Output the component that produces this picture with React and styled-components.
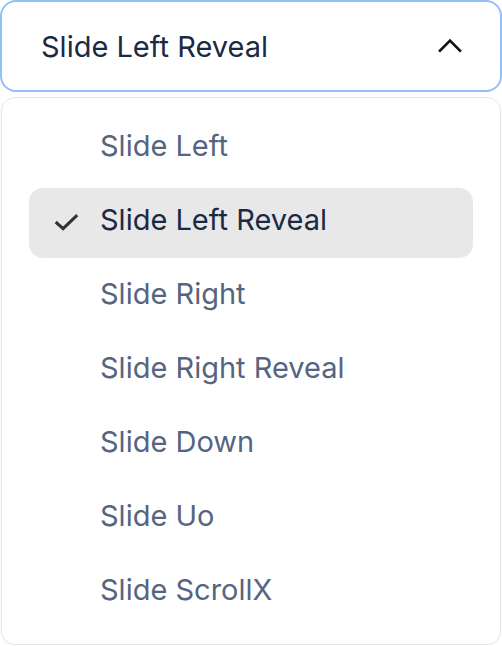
import React, { useState } from 'react';
import styled, { createGlobalStyle } from 'styled-components';

const GlobalStyle = createGlobalStyle`
body {
    margin: 0;
    background: #ffffff;
    font-family: Inter, "Noto Sans", sans-serif;
}
`

const Wrapper = styled.div`
width: 502px;
display: flex;
flex-direction: column;
gap: 5px;
`

const Trigger = styled.button`
box-sizing: border-box;
width: 502px;
height: 92px;
display: flex;
align-items: center;
justify-content: space-between;
padding: 0 34px 0 39px;
background: #ffffff;
border: 2px solid #93c0fb;
border-radius: 16px;
font-family: inherit;
font-size: 29px;
color: #1a2a44;
cursor: pointer;
`

const Menu = styled.ul`
box-sizing: border-box;
list-style: none;
margin: 0 1px;
padding: 16px 27px;
display: flex;
flex-direction: column;
gap: 4px;
border: 1px solid #e6e6e6;
border-radius: 14px;
box-shadow: 0 1px 2px rgba(0, 0, 0, 0.04);
background: #ffffff;
`

const Item = styled.li`
height: 70px;
display: flex;
align-items: center;
padding-left: 24px;
padding-bottom: 8px;
box-sizing: border-box;
border-radius: 14px;
font-size: 29px;
background: ${props => props.selected ? '#e8e8e8' : 'transparent'};
color: ${props => props.selected ? '#1a2a44' : '#56657f'};
cursor: pointer;
`

const CheckSlot = styled.span`
width: 47px;
display: flex;
align-items: center;
margin-top: 6px;
color: #333333;
`

const options = [
    'Slide Left',
    'Slide Left Reveal',
    'Slide Right',
    'Slide Right Reveal',
    'Slide Down',
    'Slide Uo',
    'Slide ScrollX',
];

export default function App() {
    const [value, setValue] = useState('Slide Left Reveal');

    return (
        <Wrapper>
            <GlobalStyle />
            <Trigger>
                <span>{value}</span>
                <svg width="32" height="32" viewBox="0 0 24 24" fill="none" stroke="#111" strokeWidth="2" strokeLinecap="square">
                    <path d="M4.5 15.5 12 8l7.5 7.5" />
                </svg>
            </Trigger>
            <Menu>
                {options.map(opt => (
                    <Item key={opt} selected={opt === value} onClick={() => setValue(opt)}>
                        <CheckSlot>
                            {opt === value && (
                                <svg width="27" height="27" viewBox="0 0 24 24" fill="none" stroke="currentColor" strokeWidth="2.8" strokeLinecap="square">
                                    <path d="M3.5 12.5 9 17.5 20.5 6.5" />
                                </svg>
                            )}
                        </CheckSlot>
                        {opt}
                    </Item>
                ))}
            </Menu>
        </Wrapper>
    );
}
